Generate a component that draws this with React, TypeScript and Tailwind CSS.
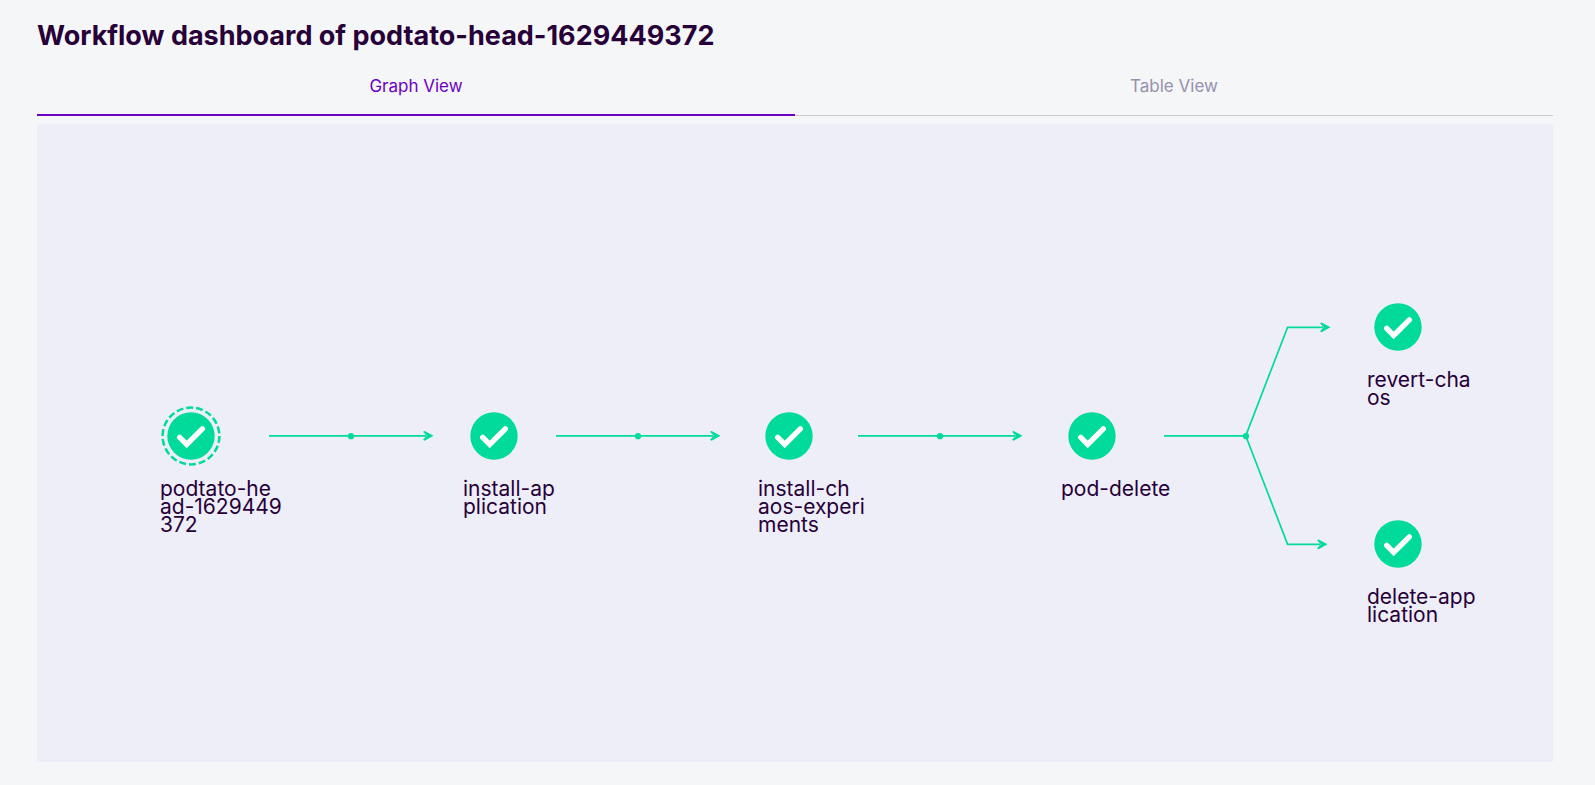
import { useState } from "react";

type WorkflowNode = { id: string; x: number; y: number; lines: string[]; root?: boolean };

const NODES: WorkflowNode[] = [
  { id: "root", x: 96, y: 173, lines: ["podtato-he", "ad-1629449", "372"], root: true },
  { id: "install-application", x: 399, y: 173, lines: ["install-ap", "plication"] },
  { id: "install-experiments", x: 694, y: 173, lines: ["install-ch", "aos-experi", "ments"] },
  { id: "pod-delete", x: 997, y: 173, lines: ["pod-delete"] },
  { id: "revert-chaos", x: 1303, y: 64, lines: ["revert-cha", "os"] },
  { id: "delete-application", x: 1303, y: 281, lines: ["delete-app", "lication"] },
];

const EDGES = [
  "M174 172.8H331",
  "M461 172.8H618",
  "M763 172.8H920",
  "M1069 172.8H1150.7L1192.6 64.3H1228",
  "M1150.7 172.8L1192.6 281.3H1225",
];

const DOTS = [256, 543, 845, 1151];

function StatusIcon({ root }: { root?: boolean }) {
  return (
    <svg viewBox="-32 -32 64 64" className="block size-16" role="img" aria-label="Succeeded">
      {root && (
        <circle r="28.4" fill="none" stroke="#00da9a" strokeWidth="2.5" strokeDasharray="6.9 3.01" />
      )}
      <circle r="23.7" fill="#00da9a" />
      <path d="M-11.3 1.4L-4.3 8.4L11.3 -7.2" fill="none" stroke="#fff" strokeWidth="5.4" strokeLinecap="round" />
    </svg>
  );
}

function WorkflowGraph() {
  return (
    <div className="relative h-[360px] w-[1400px] shrink-0">
      <svg viewBox="0 0 1400 360" className="absolute inset-0 size-full" aria-hidden="true">
        <defs>
          <marker id="arrow" markerUnits="userSpaceOnUse" markerWidth="12" markerHeight="12" viewBox="0 0 12 12" refX="4" refY="6" orient="auto">
            <path d="M1 2L2.6 1.1L11.5 6L2.6 10.9L1 10L4.8 6Z" fill="#00da9a" />
          </marker>
        </defs>
        {EDGES.map((d) => (
          <path key={d} d={d} fill="none" stroke="#00da9a" strokeWidth="1.7" markerEnd="url(#arrow)" />
        ))}
        {DOTS.map((x) => (
          <circle key={x} cx={x} cy="173.2" r="3.1" fill="#00da9a" />
        ))}
      </svg>
      {NODES.map((node) => (
        <div key={node.id} className="absolute" style={{ left: node.x - 32, top: node.y - 32 }}>
          <StatusIcon root={node.root} />
          <p className="mt-3 pl-px text-[21px] leading-[18px] whitespace-nowrap">
            {node.lines.map((line) => (
              <span key={line} className="block">{line}</span>
            ))}
          </p>
        </div>
      ))}
    </div>
  );
}

const TABS = ["Graph View", "Table View"];

export default function App() {
  const [active, setActive] = useState(0);
  return (
    <main className="flex min-h-screen flex-col bg-[#f4f6f8] pt-4 pr-[42px] pb-[23px] pl-[37px] font-['Inter',sans-serif] text-[#270038]">
      <h1 className="text-[27px] leading-10 font-bold">Workflow dashboard of podtato-head-1629449372</h1>
      <div role="tablist" className="flex">
        {TABS.map((tab, i) => (
          <button
            key={tab}
            type="button"
            role="tab"
            aria-selected={i === active}
            onClick={() => setActive(i)}
            className={
              i === active
                ? "h-15 flex-1 border-b-2 border-[#6c00bf] pt-1 text-[17px] text-[#6c00bf]"
                : "h-15 flex-1 border-b border-[#c9cacd] pt-[3px] text-[17px] text-[#9790ae]"
            }
          >
            {tab}
          </button>
        ))}
      </div>
      <section aria-label={TABS[active]} className="mt-2 flex flex-1 items-center justify-center overflow-hidden bg-[#eeeef9]">
        <WorkflowGraph />
      </section>
    </main>
  );
}
